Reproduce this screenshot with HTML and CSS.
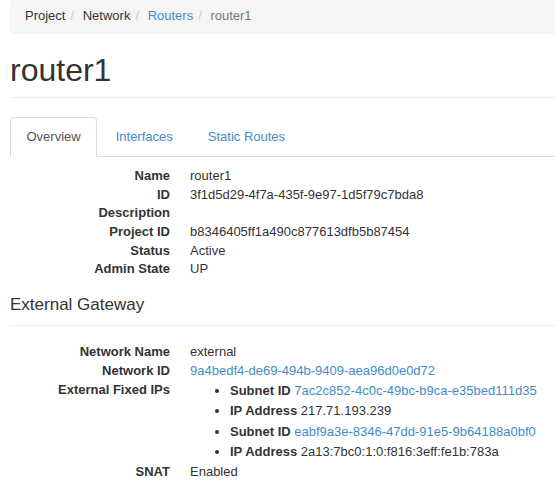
FILE: index.html
```html
<!DOCTYPE html>
<html lang="en">

<head>
    <meta charset="UTF-8">
    <meta name="viewport" content="width=device-width, initial-scale=1.0">
    <title>router1 - Router Details</title>
    <link rel="stylesheet" href="styles.css">
</head>

<body>
    <div class="page">
        <ol class="breadcrumb">
            <li>Project</li>
            <li>Network</li>
            <li><a href="#">Routers</a></li>
            <li class="active">router1</li>
        </ol>

        <div class="page-header">
            <h1>router1</h1>
        </div>

        <ul class="nav-tabs">
            <li class="active"><a href="#">Overview</a></li>
            <li><a href="#">Interfaces</a></li>
            <li><a href="#">Static Routes</a></li>
        </ul>

        <div class="tab-content">
            <dl class="dl-horizontal">
                <dt>Name</dt>
                <dd>router1</dd>
                <dt>ID</dt>
                <dd>3f1d5d29-4f7a-435f-9e97-1d5f79c7bda8</dd>
                <dt>Description</dt>
                <dd></dd>
                <dt>Project ID</dt>
                <dd>b8346405ff1a490c877613dfb5b87454</dd>
                <dt>Status</dt>
                <dd>Active</dd>
                <dt>Admin State</dt>
                <dd>UP</dd>
            </dl>

            <h4>External Gateway</h4>
            <hr>

            <dl class="dl-horizontal gateway">
                <dt>Network Name</dt>
                <dd>external</dd>
                <dt>Network ID</dt>
                <dd><a href="#">9a4bedf4-de69-494b-9409-aea96d0e0d72</a></dd>
                <dt>External Fixed IPs</dt>
                <dd>
                    <ul class="fixed-ips">
                        <li><strong>Subnet ID</strong> <a href="#">7ac2c852-4c0c-49bc-b9ca-e35bed111d35</a></li>
                        <li><strong>IP Address</strong> 217.71.193.239</li>
                        <li><strong>Subnet ID</strong> <a href="#">eabf9a3e-8346-47dd-91e5-9b64188a0bf0</a></li>
                        <li><strong>IP Address</strong> 2a13:7bc0:1:0:f816:3eff:fe1b:783a</li>
                    </ul>
                </dd>
                <dt>SNAT</dt>
                <dd>Enabled</dd>
            </dl>
        </div>
    </div>
</body>

</html>
```

FILE: styles.css
```css
html,
body {
    overflow: hidden;
}

body {
    font-family: "Liberation Sans", Arial, sans-serif;
    font-size: 13px;
    line-height: 1.428571;
    color: #333;
    background-color: #fff;
    margin: 0;
    padding: 0;
}

a {
    color: #428bca;
    text-decoration: none;
}

.page {
    margin-left: 10px;
    margin-right: -20px;
}

.breadcrumb {
    display: flex;
    list-style: none;
    margin: -1px 0 0;
    padding: 8px 15px;
    background-color: #f5f5f5;
    border-radius: 4px;
}

.breadcrumb li + li::before {
    content: "/\00a0";
    padding: 0 5px;
    color: #ccc;
}

.breadcrumb .active {
    color: #777;
}

.page-header {
    margin: 19px 0 19px;
    padding-bottom: 9px;
    border-bottom: 1px solid #eee;
}

.page-header h1 {
    margin: 0;
    font-size: 32px;
    font-weight: 500;
    line-height: 1.1;
}

.nav-tabs {
    display: flex;
    list-style: none;
    margin: 0;
    padding: 0;
    border-bottom: 1px solid #ddd;
}

.nav-tabs li {
    margin-bottom: -1px;
}

.nav-tabs a {
    display: block;
    margin-right: 2px;
    padding: 10px 15.5px;
    border: 1px solid transparent;
    border-radius: 4px 4px 0 0;
}

.nav-tabs .active a {
    color: #555;
    background-color: #fff;
    border-color: #ddd;
    border-bottom-color: transparent;
}

.tab-content {
    padding-top: 10px;
}

.dl-horizontal {
    display: grid;
    grid-template-columns: 160px 1fr;
    column-gap: 20px;
    margin: 0 0 17px;
}

.dl-horizontal dt {
    font-weight: bold;
    text-align: right;
    white-space: nowrap;
}

.dl-horizontal dd {
    margin: 0;
    min-height: 18.57px;
}

h4 {
    margin: 0;
    font-size: 17px;
    font-weight: 500;
    line-height: 1.1;
}

hr {
    margin: 11px 0 17px;
    border: 0;
    border-top: 1px solid #eee;
}

.fixed-ips {
    margin: 0;
    padding-left: 40px;
}

.fixed-ips li {
    padding: 1px 0;
}
```
